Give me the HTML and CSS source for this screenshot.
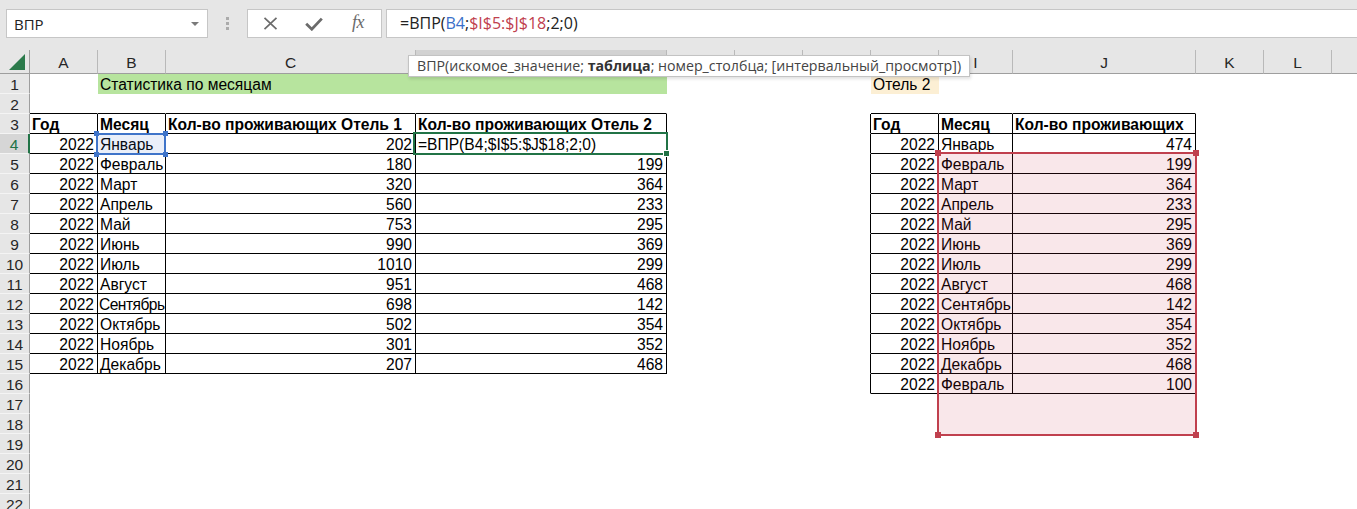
FILE: index.html
```html
<!DOCTYPE html>
<html lang="ru">
<head>
<meta charset="utf-8">
<title>ВПР</title>
<link rel="stylesheet" href="styles.css">
</head>
<body>
<div class="app">
  <div class="toolbar">
    <div class="namebox"><span>ВПР</span><svg class="dd" width="8" height="4" viewBox="0 0 8 4"><path d="M0 0H8L4 4Z" fill="#7a7a7a"/></svg></div>
    <div class="grip"><i></i><i></i><i></i></div>
    <div class="fxbtns">
      <span class="btn"><svg width="15" height="13" viewBox="0 0 15 13"><path d="M1.5 0.8L13.5 12.2M13.5 0.8L1.5 12.2" stroke="#6b6b6b" stroke-width="1.7" fill="none"/></svg></span>
      <span class="btn"><svg width="18" height="14" viewBox="0 0 18 14"><path d="M1.2 6.8L6.8 12.2L16.8 1.6" fill="none" stroke="#6b6b6b" stroke-width="2.8"/></svg></span>
      <span class="btn fx">fx</span>
    </div>
    <div class="formula">=ВПР(<span class="r1">B4</span>;<span class="r2">$I$5:$J$18</span>;2;0)</div>
  </div>
  <div class="sheet">
    <table class="grid">
      <colgroup>
        <col class="w-rh"><col class="w-d"><col class="w-d"><col class="w-c"><col class="w-dd"><col class="w-d"><col class="w-d"><col class="w-d"><col class="w-d"><col class="w-i"><col class="w-j"><col class="w-d"><col class="w-d"><col class="w-d">
      </colgroup>
      <thead>
        <tr>
          <th class="corner"><svg width="29" height="23" viewBox="0 0 29 23"><path d="M25 4V20H9Z" fill="#2b7a4b"/></svg></th>
          <th>A</th><th>B</th><th>C</th><th class="csel"></th><th></th><th></th><th></th><th></th><th>I</th><th>J</th><th>K</th><th>L</th><th></th>
        </tr>
      </thead>
      <tbody>
        <tr><th class="rh">1</th><td></td><td class="g ov">Статистика по месяцам</td><td class="g"></td><td class="g"></td><td></td><td></td><td></td><td class="o">Отель 2</td><td></td><td></td><td></td><td></td><td></td></tr>
        <tr><th class="rh">2</th><td class="bb"></td><td class="bb"></td><td class="bb"></td><td class="bb"></td><td></td><td></td><td></td><td class="bb"></td><td class="bb"></td><td class="bb"></td><td></td><td></td><td></td></tr>
        <tr><th class="rh">3</th><td class="b h">Год</td><td class="b h">Месяц</td><td class="b h">Кол-во проживающих Отель 1</td><td class="b h">Кол-во проживающих Отель 2</td><td></td><td></td><td class="br"></td><td class="b h">Год</td><td class="b h">Месяц</td><td class="b h">Кол-во проживающих</td><td></td><td></td><td></td></tr>
        <tr><th class="rh rsel">4</th><td class="b n">2022</td><td class="b">Январь</td><td class="b n">202</td><td class="b">=ВПР(B4;$I$5:$J$18;2;0)</td><td></td><td></td><td class="br"></td><td class="b n">2022</td><td class="b">Январь</td><td class="b n">474</td><td></td><td></td><td></td></tr>
        <tr><th class="rh">5</th><td class="b n">2022</td><td class="b">Февраль</td><td class="b n">180</td><td class="b n">199</td><td></td><td></td><td class="br"></td><td class="b n">2022</td><td class="b">Февраль</td><td class="b n">199</td><td></td><td></td><td></td></tr>
        <tr><th class="rh">6</th><td class="b n">2022</td><td class="b">Март</td><td class="b n">320</td><td class="b n">364</td><td></td><td></td><td class="br"></td><td class="b n">2022</td><td class="b">Март</td><td class="b n">364</td><td></td><td></td><td></td></tr>
        <tr><th class="rh">7</th><td class="b n">2022</td><td class="b">Апрель</td><td class="b n">560</td><td class="b n">233</td><td></td><td></td><td class="br"></td><td class="b n">2022</td><td class="b">Апрель</td><td class="b n">233</td><td></td><td></td><td></td></tr>
        <tr><th class="rh">8</th><td class="b n">2022</td><td class="b">Май</td><td class="b n">753</td><td class="b n">295</td><td></td><td></td><td class="br"></td><td class="b n">2022</td><td class="b">Май</td><td class="b n">295</td><td></td><td></td><td></td></tr>
        <tr><th class="rh">9</th><td class="b n">2022</td><td class="b">Июнь</td><td class="b n">990</td><td class="b n">369</td><td></td><td></td><td class="br"></td><td class="b n">2022</td><td class="b">Июнь</td><td class="b n">369</td><td></td><td></td><td></td></tr>
        <tr><th class="rh">10</th><td class="b n">2022</td><td class="b">Июль</td><td class="b n">1010</td><td class="b n">299</td><td></td><td></td><td class="br"></td><td class="b n">2022</td><td class="b">Июль</td><td class="b n">299</td><td></td><td></td><td></td></tr>
        <tr><th class="rh">11</th><td class="b n">2022</td><td class="b">Август</td><td class="b n">951</td><td class="b n">468</td><td></td><td></td><td class="br"></td><td class="b n">2022</td><td class="b">Август</td><td class="b n">468</td><td></td><td></td><td></td></tr>
        <tr><th class="rh">12</th><td class="b n">2022</td><td class="b tight">Сентябрь</td><td class="b n">698</td><td class="b n">142</td><td></td><td></td><td class="br"></td><td class="b n">2022</td><td class="b">Сентябрь</td><td class="b n">142</td><td></td><td></td><td></td></tr>
        <tr><th class="rh">13</th><td class="b n">2022</td><td class="b">Октябрь</td><td class="b n">502</td><td class="b n">354</td><td></td><td></td><td class="br"></td><td class="b n">2022</td><td class="b">Октябрь</td><td class="b n">354</td><td></td><td></td><td></td></tr>
        <tr><th class="rh">14</th><td class="b n">2022</td><td class="b">Ноябрь</td><td class="b n">301</td><td class="b n">352</td><td></td><td></td><td class="br"></td><td class="b n">2022</td><td class="b">Ноябрь</td><td class="b n">352</td><td></td><td></td><td></td></tr>
        <tr><th class="rh">15</th><td class="b n">2022</td><td class="b">Декабрь</td><td class="b n">207</td><td class="b n">468</td><td></td><td></td><td class="br"></td><td class="b n">2022</td><td class="b">Декабрь</td><td class="b n">468</td><td></td><td></td><td></td></tr>
        <tr><th class="rh">16</th><td></td><td></td><td></td><td></td><td></td><td></td><td class="br"></td><td class="b n">2022</td><td class="b">Февраль</td><td class="b n">100</td><td></td><td></td><td></td></tr>
        <tr><th class="rh">17</th><td></td><td></td><td></td><td></td><td></td><td></td><td></td><td></td><td></td><td></td><td></td><td></td><td></td></tr>
        <tr><th class="rh">18</th><td></td><td></td><td></td><td></td><td></td><td></td><td></td><td></td><td></td><td></td><td></td><td></td><td></td></tr>
        <tr><th class="rh">19</th><td></td><td></td><td></td><td></td><td></td><td></td><td></td><td></td><td></td><td></td><td></td><td></td><td></td></tr>
        <tr><th class="rh">20</th><td></td><td></td><td></td><td></td><td></td><td></td><td></td><td></td><td></td><td></td><td></td><td></td><td></td></tr>
        <tr><th class="rh">21</th><td></td><td></td><td></td><td></td><td></td><td></td><td></td><td></td><td></td><td></td><td></td><td></td><td></td></tr>
        <tr><th class="rh">22</th><td></td><td></td><td></td><td></td><td></td><td></td><td></td><td></td><td></td><td></td><td></td><td></td><td></td></tr>
      </tbody>
    </table>
  </div>

  <div class="ref ref-blue"><i class="hd tl"></i><i class="hd tr"></i><i class="hd bl"></i><i class="hd br"></i></div>
  <div class="ref ref-red"><i class="hd tl"></i><i class="hd tr"></i><i class="hd bl"></i><i class="hd br"></i></div>
  <div class="active"><i class="fill"></i></div>
  <div class="tip">ВПР(искомое_значение; <b>таблица</b>; номер_столбца; [интервальный_просмотр])</div>
</div>
</body>
</html>
```

FILE: styles.css
```css
html, body {
  margin: 0;
  padding: 0;
  background: #ffffff;
}

.app {
  position: relative;
  width: 1357px;
  height: 509px;
  overflow: hidden;
  font-family: "Liberation Sans", Arial, sans-serif;
  color: #000;
}

/* ---------- formula toolbar ---------- */
.toolbar {
  display: flex;
  align-items: flex-start;
  height: 50px;
  box-sizing: border-box;
  padding-top: 9px;
  background: #e6e6e6;
}

.namebox {
  margin-left: 6px;
  width: 202px;
  height: 29px;
  box-sizing: border-box;
  background: #fff;
  border: 1px solid #c6c6c6;
  display: flex;
  align-items: center;
  justify-content: space-between;
  padding: 0 8px 0 7px;
  font-family: "Open Sans", "Noto Sans", sans-serif;
  font-size: 15px;
  color: #222;
}

.grip {
  margin-left: 18px;
  margin-top: 8px;
  width: 3px;
  display: flex;
  flex-direction: column;
  gap: 2px;
}
.grip i {
  display: block;
  width: 3px;
  height: 3px;
  background: #ababab;
}

.fxbtns {
  margin-left: 18px;
  width: 135px;
  height: 29px;
  box-sizing: border-box;
  background: #fff;
  border: 1px solid #c6c6c6;
  display: flex;
  align-items: center;
}
.btn {
  width: 44px;
  height: 27px;
  display: flex;
  align-items: center;
  justify-content: center;
}
.fx {
  font-family: "Liberation Serif", "Times New Roman", serif;
  font-style: italic;
  font-size: 18px;
  color: #6b6b6b;
  letter-spacing: -0.5px;
  padding-bottom: 2px;
  box-sizing: border-box;
}

.formula {
  flex: 1;
  margin-left: 4px;
  height: 29px;
  box-sizing: border-box;
  background: #fff;
  border: 1px solid #c6c6c6;
  border-right: none;
  padding-left: 13px;
  font-family: "Open Sans", "Noto Sans", sans-serif;
  font-size: 16px;
  line-height: 27px;
  color: #222;
  white-space: nowrap;
}
.r1 { color: #3a6fc9; }
.r2 { color: #c0404e; }

/* ---------- sheet grid ---------- */
.sheet {
  width: 1357px;
  overflow: hidden;
}

.grid {
  table-layout: fixed;
  border-collapse: separate;
  border-spacing: 0;
  width: 1400px;
  font-size: 15.6px;
}

.w-rh { width: 30px; }
.w-d  { width: 68px; }
.w-c  { width: 250px; }
.w-dd { width: 251px; }
.w-i  { width: 74px; }
.w-j  { width: 183px; }

.grid thead th {
  height: 24px;
  box-sizing: border-box;
  padding: 2px 0 0;
  background: #e6e6e6;
  border-right: 1px solid #b9b9b9;
  border-bottom: 1px solid #9e9e9e;
  font-weight: normal;
  font-size: 15.5px;
  color: #262626;
  text-align: center;
  vertical-align: middle;
  line-height: 21px;
}
.grid thead th.corner {
  padding: 0;
  border-right-color: #9e9e9e;
}
.corner svg {
  display: block;
}
.grid thead th.csel {
  background: #d2d2d2;
  color: #217346;
  border-bottom: 2px solid #217346;
}

.grid th.rh {
  height: 20px;
  box-sizing: border-box;
  padding: 2px 0 0;
  background: #e6e6e6;
  border-right: 1px solid #9e9e9e;
  border-bottom: 1px solid #f4f4f4;
  font-weight: normal;
  font-size: 15.5px;
  color: #262626;
  text-align: center;
  line-height: 17px;
  vertical-align: middle;
}
.grid th.rsel {
  background: #d6d6d6;
  color: #217346;
  border-right: 2px solid #217346;
}

.grid td {
  height: 20px;
  box-sizing: border-box;
  padding: 2px 2px 0;
  border-right: 1px solid transparent;
  border-bottom: 1px solid transparent;
  line-height: 17px;
  white-space: nowrap;
  overflow: hidden;
  vertical-align: middle;
}

.grid td.b {
  border-right-color: #000;
  border-bottom-color: #000;
}
.grid td.bb { border-bottom-color: #000; }
.grid td.br { border-right-color: #000; }
.grid td.n  { text-align: right; padding-right: 3px; }
.grid td.h  { font-weight: bold; }
.grid td.g  { background: #b7e49e; }
.grid td.o  { background: #fcefd4; }
.grid td.ov { overflow: visible; }
.grid td.tight {
  padding-left: 1px;
  padding-right: 0;
  letter-spacing: -0.55px;
}

/* ---------- overlays ---------- */
.ref {
  position: absolute;
  box-sizing: border-box;
}
.ref-blue {
  left: 96px;
  top: 133px;
  width: 70px;
  height: 22px;
  border: 2px solid #3f74c9;
  background: rgba(60, 110, 200, 0.11);
}
.ref-red {
  left: 937px;
  top: 152px;
  width: 260px;
  height: 284px;
  border: 2px solid #c0404e;
  background: rgba(200, 40, 60, 0.11);
}
.hd {
  position: absolute;
  width: 5px;
  height: 5px;
}
.ref-blue .hd { background: #3f74c9; }
.ref-red .hd { background: #c0404e; width: 6px; height: 6px; }
.hd.tl { left: -4px; top: -4px; }
.hd.tr { right: -4px; top: -4px; }
.hd.bl { left: -4px; bottom: -4px; }
.hd.br { right: -4px; bottom: -4px; }

.active {
  position: absolute;
  left: 413px;
  top: 132px;
  width: 255px;
  height: 23px;
  box-sizing: border-box;
  border: 2px solid #217346;
}
.active .fill {
  position: absolute;
  right: -4px;
  bottom: -4px;
  width: 5px;
  height: 5px;
  background: #217346;
  border: 1px solid #fff;
}

.tip {
  position: absolute;
  left: 408px;
  top: 55px;
  height: 22px;
  box-sizing: border-box;
  padding: 0 8px;
  background: #fff;
  border: 1px solid #c3c3c3;
  box-shadow: 1px 2px 3px rgba(0, 0, 0, 0.12);
  font-family: "Open Sans", "Noto Sans", sans-serif;
  font-size: 14.2px;
  line-height: 20px;
  color: #444;
  white-space: nowrap;
}
.tip b {
  color: #333;
}
```
